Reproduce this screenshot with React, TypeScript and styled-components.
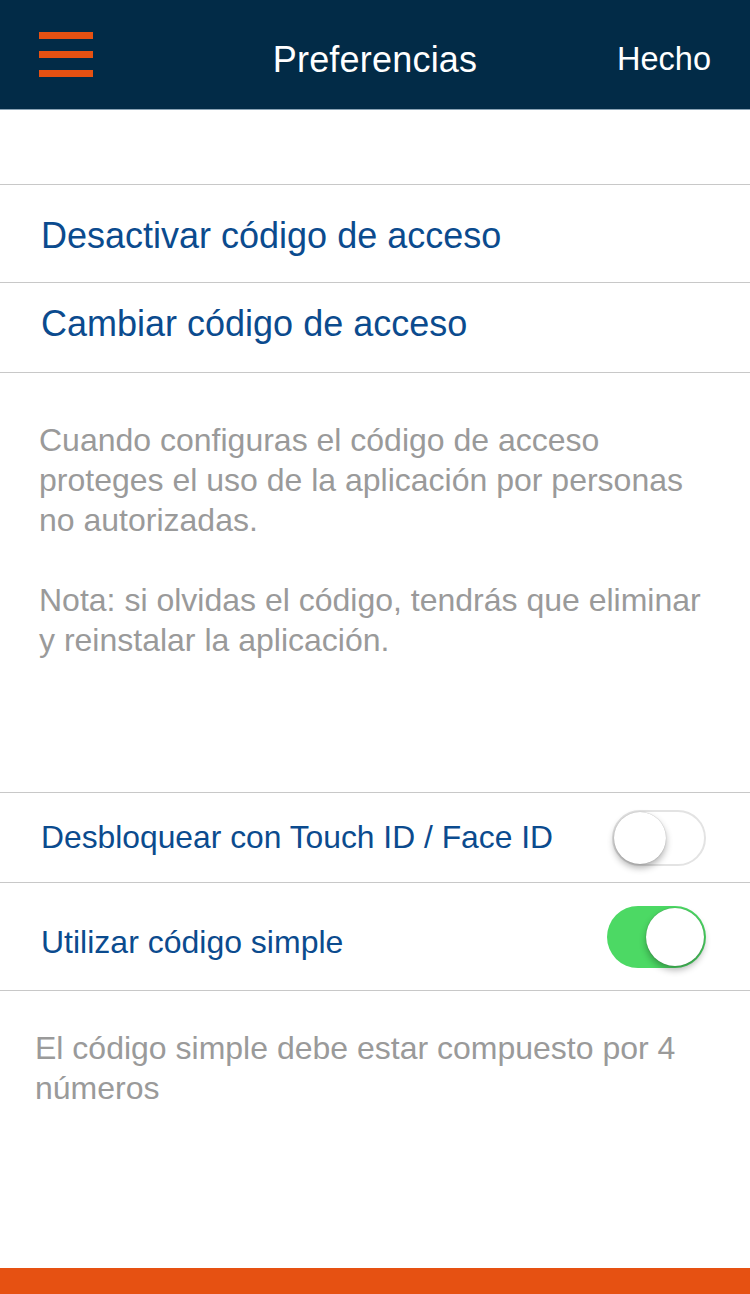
import styled, { createGlobalStyle } from "styled-components";

const GlobalStyle = createGlobalStyle`
  html, body {
    margin: 0;
    padding: 0;
    background: #ffffff;
  }
  body {
    font-family: "Liberation Sans", Arial, sans-serif;
    -webkit-font-smoothing: antialiased;
  }
`;

const Screen = styled.div`
  width: 750px;
  height: 1294px;
  display: flex;
  flex-direction: column;
  background: #ffffff;
  overflow: hidden;
`;

const Header = styled.header`
  height: 110px;
  flex-shrink: 0;
  background: #022b47;
  border-bottom: 1px solid #8aa3b5;
  box-sizing: border-box;
  display: grid;
  grid-template-columns: 1fr auto 1fr;
  align-items: center;
  padding: 0 39px;
`;

const MenuButton = styled.button`
  justify-self: start;
  width: 54px;
  height: 45px;
  padding: 0;
  border: 0;
  background: transparent;
  display: flex;
  flex-direction: column;
  justify-content: space-between;
  cursor: pointer;

  span {
    display: block;
    height: 7px;
    background: #e65112;
  }
`;

const Title = styled.h1`
  margin: 10px 0 0;
  font-size: 36px;
  font-weight: 400;
  color: #ffffff;
  letter-spacing: 0.2px;
`;

const Done = styled.button`
  justify-self: end;
  margin: 10px 0 0 0;
  border: 0;
  padding: 0;
  background: transparent;
  font-family: inherit;
  font-size: 32.5px;
  color: #ffffff;
`;

const Group = styled.section<{ $top: number }>`
  margin-top: ${(p) => p.$top}px;
  border-top: 1px solid #c8c8c8;
`;

const Row = styled.div<{ $height: number; $size: number; $shift?: number }>`
  height: ${(p) => p.$height}px;
  box-sizing: border-box;
  border-bottom: 1px solid #c8c8c8;
  display: flex;
  align-items: center;
  justify-content: space-between;
  padding: 0 44px 0 41px;
  font-size: ${(p) => p.$size}px;
  color: #0b4b8e;

  & > span {
    position: relative;
    top: ${(p) => p.$shift ?? 0}px;
  }
`;

const Note = styled.p<{ $left: number; $top: number }>`
  margin: ${(p) => p.$top}px 0 0;
  padding: 0 20px 0 ${(p) => p.$left}px;
  font-size: 32px;
  line-height: 40px;
  color: #9a9a9a;
`;

const Switch = styled.div<{ $on: boolean; $w: number; $h: number }>`
  position: relative;
  width: ${(p) => p.$w}px;
  height: ${(p) => p.$h}px;
  border-radius: ${(p) => p.$h / 2}px;
  box-sizing: border-box;
  background: ${(p) => (p.$on ? "#4cd964" : "#ffffff")};
  border: ${(p) => (p.$on ? "none" : "2px solid #e3e3e3")};
  flex-shrink: 0;

  &::after {
    content: "";
    position: absolute;
    top: ${(p) => (p.$on ? 2 : 0)}px;
    ${(p) => (p.$on ? "right: 2px;" : "left: 0;")}
    width: ${(p) => p.$h - 4}px;
    height: ${(p) => p.$h - 4}px;
    border-radius: 50%;
    background: #ffffff;
    box-shadow: 0 4px 7px rgba(0, 0, 0, 0.3), 0 0 1px rgba(0, 0, 0, 0.35);
  }
`;

const Spacer = styled.div`
  flex: 1;
`;

const BottomBar = styled.footer`
  height: 26px;
  flex-shrink: 0;
  background: #e65112;
`;

export default function App() {
  return (
    <>
      <GlobalStyle />
      <Screen>
        <Header>
          <MenuButton aria-label="Menú">
            <span />
            <span />
            <span />
          </MenuButton>
          <Title>Preferencias</Title>
          <Done>Hecho</Done>
        </Header>

        <Group $top={74}>
          <Row $height={98} $size={36} $shift={2}>
            <span>Desactivar código de acceso</span>
          </Row>
          <Row $height={90} $size={36} $shift={-4}>
            <span>Cambiar código de acceso</span>
          </Row>
        </Group>

        <Note $left={39} $top={47}>
          Cuando configuras el código de acceso
          <br />
          proteges el uso de la aplicación por personas
          <br />
          no autorizadas.
          <br />
          <br />
          Nota: si olvidas el código, tendrás que eliminar
          <br />
          y reinstalar la aplicación.
        </Note>

        <Group $top={132}>
          <Row $height={90} $size={31.8}>
            <span>Desbloquear con Touch ID / Face ID</span>
            <Switch $on={false} $w={94} $h={56} />
          </Row>
          <Row $height={108} $size={32} $shift={6}>
            <span>Utilizar código simple</span>
            <Switch $on={true} $w={99} $h={62} />
          </Row>
        </Group>

        <Note $left={35} $top={37}>
          El código simple debe estar compuesto por 4
          <br />
          números
        </Note>

        <Spacer />
        <BottomBar />
      </Screen>
    </>
  );
}
